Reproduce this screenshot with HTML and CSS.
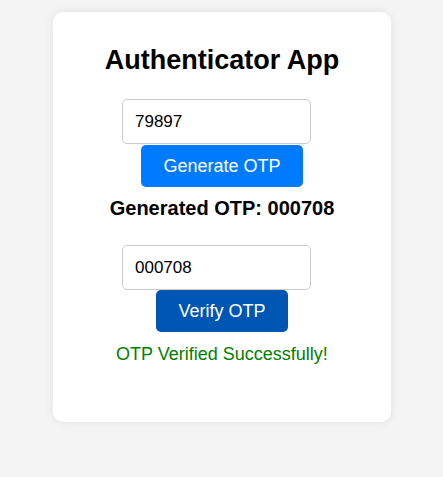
FILE: index.html
```html
<!DOCTYPE html>
<html>
<head>
<meta charset="utf-8">
<link rel="stylesheet" href="styles.css">
</head>
<body>
<div class="card">
  <h2 class="title">Authenticator App</h2>
  <input class="field" type="text" value="79897">
  <button class="btn btn-primary">Generate OTP</button>
  <h3 class="otp">Generated OTP: 000708</h3>
  <input class="field field-second" type="text" value="000708">
  <button class="btn btn-dark">Verify OTP</button>
  <p class="msg">OTP Verified Successfully!</p>
</div>
</body>
</html>
```

FILE: styles.css
```css
html, body {
  margin: 0;
  padding: 0;
}
body {
  background: #f4f4f4;
  font-family: "Liberation Sans", Arial, sans-serif;
  width: 443px;
  height: 477px;
  padding-top: 12px;
  box-sizing: border-box;
}
.card {
  width: 338px;
  height: 410px;
  margin-left: 53px;
  box-sizing: border-box;
  background: #fff;
  border-radius: 10px;
  box-shadow: 0 0 10px rgba(0,0,0,0.08);
  display: flex;
  flex-direction: column;
  align-items: center;
  padding-top: 33px;
}
.title {
  margin: 0;
  font-size: 27px;
  font-weight: bold;
  color: #000;
  line-height: 31px;
}
.field {
  margin-top: 23px;
  margin-right: 11px;
  width: 189px;
  height: 45px;
  box-sizing: border-box;
  border: 1px solid #ccc;
  border-radius: 5px;
  padding: 0 12px;
  font-family: "Liberation Sans", Arial, sans-serif;
  font-size: 17px;
  color: #000;
  outline: none;
  background: #fff;
}
.field-second {
  margin-top: 25px;
}
.btn {
  height: 42px;
  border: none;
  border-radius: 5px;
  color: #fff;
  font-family: "Liberation Sans", Arial, sans-serif;
  font-size: 18px;
  padding: 0 22px;
}
.btn-primary {
  background: #007bff;
  margin-top: 1px;
}
.btn-dark {
  background: #0056b3;
  margin-top: 0;
}
.otp {
  margin: 10px 0 0;
  font-size: 20px;
  line-height: 23px;
  font-weight: bold;
  color: #000;
}
.msg {
  margin: 12px 0 0;
  color: #008000;
  font-size: 18px;
  line-height: 21px;
}
```
